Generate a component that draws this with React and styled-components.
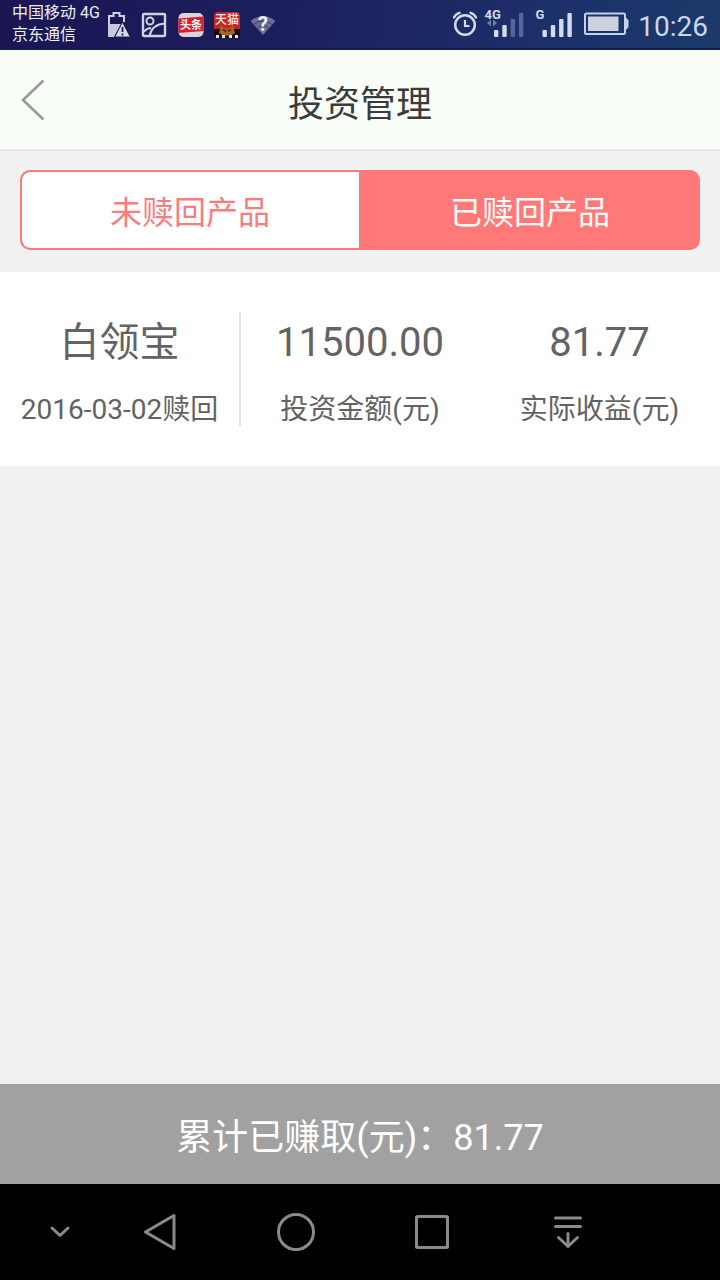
import React from 'react';
import styled, {createGlobalStyle} from "styled-components";

const GlobalStyle = createGlobalStyle`
  * {
    box-sizing: border-box;
  }
  body {
    margin: 0;
    font-family: Roboto, "Noto Sans CJK SC", sans-serif;
  }
  svg {
    display: block;
    flex: none;
  }
`;

const Screen = styled.div`
  display: flex;
  flex-direction: column;
  width: 720px;
  height: 1280px;
  overflow: hidden;
  background-color: #f1f1f1;
`;

const StatusBar = styled.div`
  display: flex;
  justify-content: space-between;
  height: 50px;
  padding: 0 12px;
  color: #d3d9ea;
  background: linear-gradient(100deg, #1a1654 0%, #1c1f5c 40%, #1c3069 75%, #1b3a6b 100%);
  border-bottom: 2px solid #12204c;
`;

const StatusGroup = styled.div`
  display: flex;
  align-items: center;
  gap: ${props => props.gap}px;
  padding-top: ${props => props.shift || 0}px;
`;

const Carrier = styled.div`
  width: 92px;
  padding-bottom: 1px;
  font-size: 16px;
  line-height: 22px;
  white-space: nowrap;
  color: #eceef8;
`;

const Clock = styled.div`
  padding-top: 5px;
  font-size: 28px;
  line-height: 34px;
  color: #ccd6ea;
`;

const Header = styled.div`
  display: grid;
  grid-template-columns: 100px 1fr 100px;
  align-items: center;
  height: 101px;
  background-color: #f9fff8;
  border-bottom: 2px solid #e6e7e6;
`;

const BackButton = styled.button`
  display: flex;
  width: 100px;
  height: 99px;
  padding: 28px 0 0 20px;
  border: none;
  background: none;
`;

const Title = styled.div`
  padding-top: 11px;
  font-size: 36px;
  line-height: 48px;
  text-align: center;
  color: #3a3b3a;
`;

const Tabs = styled.div`
  display: grid;
  grid-template-columns: 337px 1fr;
  height: 80px;
  margin: 19px 20px 22px;
  border: 2px solid #ff7979;
  border-radius: 10px;
  background-color: #ff7979;
  overflow: hidden;
`;

const Tab = styled.button`
  padding: ${props => props.active ? "6px 0 0 3px" : "6px 1px 0 0"};
  border: none;
  border-radius: ${props => props.active ? "0" : "8px 0 0 8px"};
  font-family: inherit;
  font-size: 32px;
  line-height: 44px;
  color: ${props => props.active ? "#fffdf8" : "#fb7c7e"};
  background-color: ${props => props.active ? "#ff7979" : "#fff"};
`;

const Card = styled.div`
  display: grid;
  grid-template-columns: 241px 238px 241px;
  height: 194px;
  padding: 40px 0;
  background-color: #fff;
`;

const Cell = styled.div`
  height: 114px;
  text-align: center;
  white-space: nowrap;
  color: #636363;
  border-right: ${props => props.divided ? "2px solid #e2e2e2" : "none"};
`;

const Main = styled.div`
  height: 60px;
  padding-top: 1px;
  font-size: 40px;
  line-height: 60px;
`;

const Sub = styled.div`
  margin-top: 18px;
  font-size: 28px;
  line-height: 40px;
`;

const Total = styled.div`
  display: flex;
  align-items: center;
  justify-content: center;
  height: 100px;
  padding-top: 7px;
  margin-top: auto;
  font-size: 36px;
  line-height: 48px;
  color: #fff;
  background-color: #a1a1a1;
`;

const NavBar = styled.div`
  display: grid;
  grid-template-columns: 120px 80px 192px 80px 192px;
  place-items: center;
  height: 96px;
  background-color: #000;
`;

const LowBatteryIcon = () => (
    <svg width="26" height="28" viewBox="0 0 26 28">
        <path d="M4 13V5h4.500V2h6v3H19v6" fill="none" stroke="#d0d0e2" strokeWidth="2"/>
        <path d="M3 13h13l-7 13H3z" fill="#c9c8dd"/>
        <path d="M17.500 11l7.800 15H9.700z" fill="#d9d9e8" stroke="#1c1b58" strokeWidth="1"/>
        <path d="M17.500 16v5M17.500 22.500v2" stroke="#1c1b58" strokeWidth="1.800"/>
    </svg>
);

const PictureIcon = () => (
    <svg width="26" height="26" viewBox="0 0 26 26" fill="none" stroke="#d0d1e4" strokeWidth="2.400">
        <rect x="2" y="2" width="22" height="22" rx="1"/>
        <circle cx="9" cy="9" r="3.500" strokeWidth="2"/>
        <path d="M8.500 24C10 16.500 15 12 24 11.500M3 19.500q3-3.500 7-3.500" strokeWidth="2"/>
    </svg>
);

const ToutiaoIcon = () => (
    <svg width="26" height="26" viewBox="0 0 26 26">
        <rect x="0.500" y="1" width="25" height="24" rx="5" fill="#d9d3dc"/>
        <path d="M0.500 6.500l25-2v14.500l-25 2z" fill="#d8202c"/>
        <text x="13" y="17" fontSize="11" fontWeight="700" textAnchor="middle" fill="#fff">头条</text>
    </svg>
);

const TmallIcon = () => (
    <svg width="26" height="28" viewBox="0 0 26 28">
        <path d="M4 1h18a4 4 0 0 1 4 4v14H0V5a4 4 0 0 1 4-4z" fill="#c92226"/>
        <path d="M0 18h26v5a4 4 0 0 1-4 4H4a4 4 0 0 1-4-4z" fill="#170c12"/>
        <path d="M5 22l2-8 4 3.500h4l4-3.500 2 8-4 2.500H9z" fill="#a6622c"/>
        <path d="M9 18.500l3 2M17 18.500l-3 2" stroke="#3a1710" strokeWidth="1.500"/>
        <path d="M2 27v-3h3v3M8 27v-3h3v3M15 27v-3h3v3M21 27v-3h3v3" fill="#eee1d5"/>
        <text x="13" y="13" fontSize="12" fontWeight="500" textAnchor="middle" fill="#ffe9e4">天猫</text>
    </svg>
);

const WifiIcon = () => (
    <svg width="26" height="32" viewBox="0 -5 26 32">
        <path d="M0.500 7Q13-3 25.500 7L13 21z" fill="#6d6e94"/>
        <path d="M4 10.500Q13 3 22 10.500M7.500 14Q13 9 18.500 14" fill="none" stroke="#39396d" strokeWidth="1"/>
        <text x="13" y="17" fontSize="20" fontWeight="700" textAnchor="middle" fill="#f0f0f6">?</text>
    </svg>
);

const AlarmIcon = () => (
    <svg width="26" height="28" viewBox="0 0 26 28" fill="none" stroke="#d3d9ea" strokeLinecap="round">
        <circle cx="13" cy="15" r="9.800" strokeWidth="2.500"/>
        <path d="M13 10v6h4.500" strokeWidth="2.200" strokeLinecap="butt"/>
        <path d="M2 7.500Q3.500 4 7.500 2.800M24 7.500Q22.500 4 18.500 2.800" strokeWidth="2.300"/>
    </svg>
);

const Signal = ({label, level, data}) => (
    <svg width="40" height="32" viewBox="0 0 40 32">
        <text x={data ? 0.5 : 1.5} y="10.500" fontSize="13" fontWeight="700" fill="#d3d9ea">{label}</text>
        {data && <path d="M3 15l4-3.500v7zM13 15l-4-3.500v7z" fill="#6d7ca6"/>}
        {[7, 12, 18, 24].map((height, index) => (
            <rect
                key={height}
                x={(data ? 10 : 8.5) + index * 8.3}
                y={29 - height}
                width="4.400"
                height={height}
                rx="1"
                fill={index < level ? "#d3dcee" : "#56659a"}
            />
        ))}
    </svg>
);

const BatteryIcon = () => (
    <svg width="46" height="24" viewBox="0 0 46 24">
        <rect x="1" y="1.500" width="40" height="20.500" rx="1.500" fill="none" stroke="#c6d2e8" strokeWidth="2"/>
        <rect x="4" y="4.500" width="30.500" height="14.500" fill="#ccd2de"/>
        <path d="M41 6h1.500l2 2.500v6.500l-2 2.500H41z" fill="#c6d2e8"/>
    </svg>
);

const NavIcon = ({width, height, children}) => (
    <svg
        width={width}
        height={height}
        fill="none"
        stroke="#8a8a8a"
        strokeWidth="3"
        strokeLinejoin="round"
        strokeLinecap="round"
    >
        {children}
    </svg>
);

const cells = [
    {main: "白领宝", sub: "2016-03-02赎回", divided: true},
    {main: "11500.00", sub: "投资金额(元)"},
    {main: "81.77", sub: "实际收益(元)"}
];

export default class App extends React.Component {
    state = {
        tab: 1
    }

    selectTab = (tab) => {
        this.setState({
            tab
        });
    }

    render() {
        const {tab} = this.state;
        return (
            <Screen>
                <GlobalStyle/>
                <StatusBar>
                    <StatusGroup gap={1}>
                        <Carrier>中国移动 4G<br/>京东通信</Carrier>
                        <StatusGroup gap={10.3} shift={1}>
                            <LowBatteryIcon/>
                            <PictureIcon/>
                            <ToutiaoIcon/>
                            <TmallIcon/>
                            <WifiIcon/>
                        </StatusGroup>
                    </StatusGroup>
                    <StatusGroup gap={8.5}>
                        <StatusGroup gap={6}>
                            <AlarmIcon/>
                            <StatusGroup gap={10}>
                                <Signal label="4G" level={2} data/>
                                <Signal label="G" level={4}/>
                                <BatteryIcon/>
                            </StatusGroup>
                        </StatusGroup>
                        <Clock>10:26</Clock>
                    </StatusGroup>
                </StatusBar>
                <Header>
                    <BackButton>
                        <svg width="26" height="44" viewBox="0 0 26 44" fill="none" stroke="#969b96" strokeWidth="2.600">
                            <path d="M23.500 2.500L3 22l20.500 19.500"/>
                        </svg>
                    </BackButton>
                    <Title>投资管理</Title>
                </Header>
                <Tabs>
                    {["未赎回产品", "已赎回产品"].map((name, index) => (
                        <Tab key={name} active={tab === index} onClick={() => this.selectTab(index)}>{name}</Tab>
                    ))}
                </Tabs>
                <Card>
                    {cells.map(({main, sub, divided}) => (
                        <Cell key={main} divided={divided}>
                            <Main>{main}</Main>
                            <Sub>{sub}</Sub>
                        </Cell>
                    ))}
                </Card>
                <Total>累计已赚取(元)：81.77</Total>
                <NavBar>
                    <NavIcon width={20} height={12}>
                        <path d="M2 2l8 7.500L18 2"/>
                    </NavIcon>
                    <NavIcon width={34} height={38}>
                        <path d="M31 2.500v33L2.500 19z"/>
                    </NavIcon>
                    <NavIcon width={40} height={40}>
                        <circle cx="20" cy="20" r="17.500"/>
                    </NavIcon>
                    <NavIcon width={36} height={36}>
                        <rect x="2.500" y="2.500" width="31" height="31" rx="1"/>
                    </NavIcon>
                    <NavIcon width={30} height={36}>
                        <path d="M2.500 4h25M2.500 12.500h25M15 19.500v13M5.500 23.500L15 32.500l9.500-9"/>
                    </NavIcon>
                </NavBar>
            </Screen>
        )
    }
}
